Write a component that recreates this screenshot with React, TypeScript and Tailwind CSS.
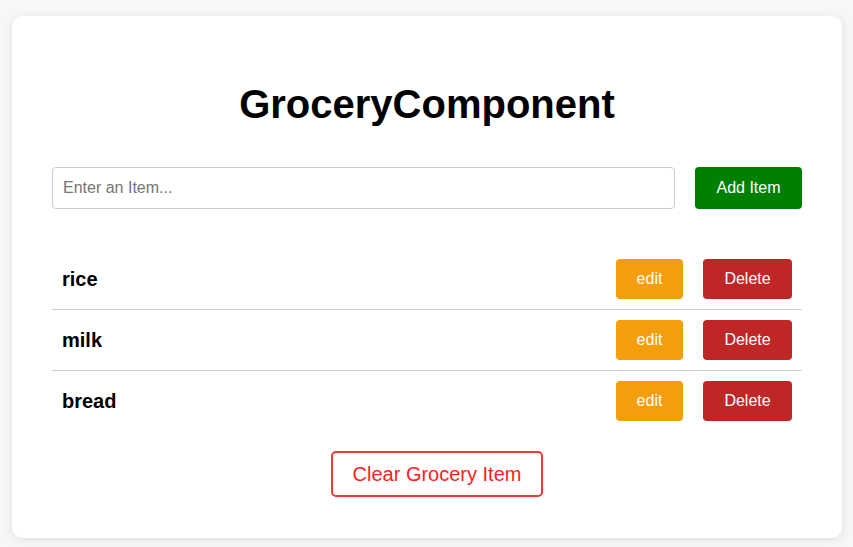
const items = ["rice", "milk", "bread"]

const GroceryComponent = () => {
  return (
    <div className="min-h-screen bg-[#f7f7f7] pl-[12px] pt-[16px] pb-[9px] font-['Liberation_Sans',Arial,sans-serif]">
      <div className="w-[830px] bg-white rounded-[10px] shadow-[0_2px_10px_rgba(0,0,0,0.1)] px-[40px] pt-[40px] pb-[41px]">
        <h1 className="mt-[25px] mb-[40px] text-center text-[40px] leading-[46px] font-bold text-black">GroceryComponent</h1>

        <div className="flex flex-row gap-[20px]">
          <input
            type="text"
            placeholder="Enter an Item..."
            className="flex-1 h-[42px] border border-[#cccccc] rounded-[4px] px-[10px] text-[16px] text-black placeholder:text-[#757575] outline-none"
          />
          <button className="w-[107px] h-[42px] bg-[#008000] text-white text-[16px] rounded-[4px]">Add Item</button>
        </div>

        <ul className="mt-[40px]">
          {items.map((item, i) => (
            <li
              key={item}
              className={`flex flex-row items-center justify-between py-[10px] px-[10px] ${i < items.length - 1 ? "border-b border-[#cccccc]" : ""}`}
            >
              <span className="text-[20px] font-bold text-black">{item}</span>
              <div className="flex flex-row gap-[20px]">
                <button className="w-[67px] h-[40px] bg-[#f59e0b] text-white text-[16px] rounded-[4px]">edit</button>
                <button className="w-[89px] h-[40px] bg-[#bf2626] text-white text-[16px] rounded-[4px]">Delete</button>
              </div>
            </li>
          ))}
        </ul>

        <div className="flex justify-center mt-[20px] pl-[20px]">
          <button className="w-[212px] h-[46px] border-2 border-[#f03a32] rounded-[5px] text-[20px] text-[#ff2020] bg-white">Clear Grocery Item</button>
        </div>
      </div>
    </div>
  )
}

export default GroceryComponent
